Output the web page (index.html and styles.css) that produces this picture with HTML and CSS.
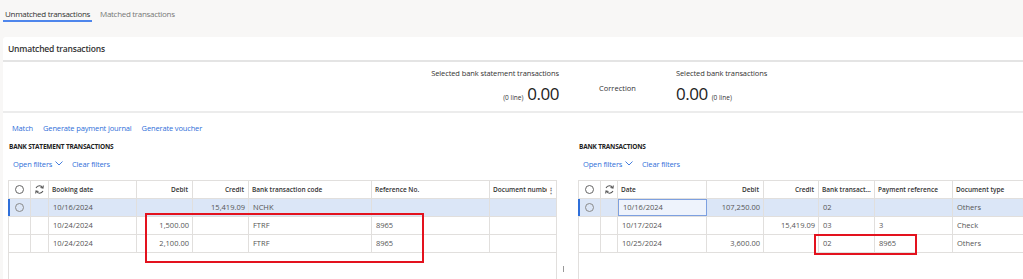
FILE: index.html
```html
<!DOCTYPE html>
<html lang="en">
<head>
<meta charset="utf-8">
<title>Unmatched transactions</title>
<link rel="stylesheet" href="styles.css">
</head>
<body>
<div class="tabs">
  <span class="tab active">Unmatched transactions</span>
  <span class="tab">Matched transactions</span>
</div>
<div class="card">
  <div class="card-header">Unmatched transactions</div>
  <div class="summary">
    <div class="sum-left">
      <div class="sum-label">Selected bank statement transactions</div>
      <div class="sum-value"><span class="lines">(0 line)</span><span class="amount">0.00</span></div>
    </div>
    <div class="sum-mid">Correction</div>
    <div class="sum-right">
      <div class="sum-label">Selected bank transactions</div>
      <div class="sum-value"><span class="amount">0.00</span><span class="lines">(0 line)</span></div>
    </div>
  </div>
  <div class="actions">
    <span class="link">Match</span>
    <span class="link">Generate payment journal</span>
    <span class="link">Generate voucher</span>
  </div>
  <div class="panels">
    <div class="panel panel-left">
      <div class="section-title">BANK STATEMENT TRANSACTIONS</div>
      <div class="filters">
        <span class="link">Open filters <svg class="chev" viewBox="0 0 8 5" width="8" height="5"><path d="M0.5 0.5 L4 4 L7.5 0.5" fill="none" stroke="currentColor" stroke-width="0.9"/></svg></span>
        <span class="link">Clear filters</span>
      </div>
      <div class="grid-wrap">
        <div class="row head lgrid">
          <div class="cell ic"><span class="radio"></span></div>
          <div class="cell ic"><svg class="refresh" viewBox="0 0 12 12" width="11" height="11"><path d="M9.6 4 A4.2 4.2 0 0 0 2.2 4.3" fill="none" stroke="#555" stroke-width="1.1"/><path d="M10.2 1.6 L9.8 4.4 L7.1 3.8" fill="none" stroke="#555" stroke-width="1.1"/><path d="M2.4 8 A4.2 4.2 0 0 0 9.8 7.7" fill="none" stroke="#555" stroke-width="1.1"/><path d="M1.8 10.4 L2.2 7.6 L4.9 8.2" fill="none" stroke="#555" stroke-width="1.1"/></svg></div>
          <div class="cell">Booking date</div>
          <div class="cell num">Debit</div>
          <div class="cell num">Credit</div>
          <div class="cell">Bank transaction code</div>
          <div class="cell">Reference No.</div>
          <div class="cell last clipcell"><span class="clip">Document number</span><span class="dots">&#8942;</span></div>
        </div>
        <div class="row sel lgrid">
          <div class="cell ic"><span class="radio light"></span></div>
          <div class="cell"></div>
          <div class="cell">10/16/2024</div>
          <div class="cell num"></div>
          <div class="cell num">15,419.09</div>
          <div class="cell">NCHK</div>
          <div class="cell"></div>
          <div class="cell last"></div>
        </div>
        <div class="row lgrid">
          <div class="cell"></div>
          <div class="cell"></div>
          <div class="cell">10/24/2024</div>
          <div class="cell num">1,500.00</div>
          <div class="cell num"></div>
          <div class="cell">FTRF</div>
          <div class="cell">8965</div>
          <div class="cell last"></div>
        </div>
        <div class="row lgrid">
          <div class="cell"></div>
          <div class="cell"></div>
          <div class="cell">10/24/2024</div>
          <div class="cell num">2,100.00</div>
          <div class="cell num"></div>
          <div class="cell">FTRF</div>
          <div class="cell">8965</div>
          <div class="cell last"></div>
        </div>
        <div class="annot annot-left"></div>
      </div>
    </div>
    <div class="splitter"><span class="grip"></span></div>
    <div class="panel panel-right">
      <div class="section-title">BANK TRANSACTIONS</div>
      <div class="filters">
        <span class="link">Open filters <svg class="chev" viewBox="0 0 8 5" width="8" height="5"><path d="M0.5 0.5 L4 4 L7.5 0.5" fill="none" stroke="currentColor" stroke-width="0.9"/></svg></span>
        <span class="link">Clear filters</span>
      </div>
      <div class="grid-wrap wide">
        <div class="row head rgrid">
          <div class="cell ic"><span class="radio"></span></div>
          <div class="cell ic"><svg class="refresh" viewBox="0 0 12 12" width="11" height="11"><path d="M9.6 4 A4.2 4.2 0 0 0 2.2 4.3" fill="none" stroke="#555" stroke-width="1.1"/><path d="M10.2 1.6 L9.8 4.4 L7.1 3.8" fill="none" stroke="#555" stroke-width="1.1"/><path d="M2.4 8 A4.2 4.2 0 0 0 9.8 7.7" fill="none" stroke="#555" stroke-width="1.1"/><path d="M1.8 10.4 L2.2 7.6 L4.9 8.2" fill="none" stroke="#555" stroke-width="1.1"/></svg></div>
          <div class="cell">Date</div>
          <div class="cell num">Debit</div>
          <div class="cell num">Credit</div>
          <div class="cell clipcell"><span class="clip ell">Bank transaction code</span></div>
          <div class="cell">Payment reference</div>
          <div class="cell last">Document type</div>
        </div>
        <div class="row sel rgrid">
          <div class="cell ic"><span class="radio light"></span></div>
          <div class="cell"></div>
          <div class="cell focus">10/16/2024</div>
          <div class="cell num">107,250.00</div>
          <div class="cell num"></div>
          <div class="cell">02</div>
          <div class="cell"></div>
          <div class="cell last">Others</div>
        </div>
        <div class="row rgrid">
          <div class="cell"></div>
          <div class="cell"></div>
          <div class="cell">10/17/2024</div>
          <div class="cell num"></div>
          <div class="cell num">15,419.09</div>
          <div class="cell">03</div>
          <div class="cell">3</div>
          <div class="cell last">Check</div>
        </div>
        <div class="row rgrid">
          <div class="cell"></div>
          <div class="cell"></div>
          <div class="cell">10/25/2024</div>
          <div class="cell num">3,600.00</div>
          <div class="cell num"></div>
          <div class="cell">02</div>
          <div class="cell">8965</div>
          <div class="cell last">Others</div>
        </div>
        <div class="annot annot-right"></div>
      </div>
    </div>
  </div>
</div>
</body>
</html>
```
FILE: styles.css
```css
html, body {
  margin: 0;
  padding: 0;
}
body {
  width: 1023px;
  height: 279px;
  overflow: hidden;
  background: #f8f7f6;
  font-family: "Open Sans", "Noto Sans", sans-serif;
  color: #333;
}
.tabs {
  display: flex;
  gap: 6px;
  height: 37px;
  padding-left: 3px;
  box-sizing: border-box;
  padding-top: 8px;
}
.tab {
  font-size: 8px;
  letter-spacing: -0.3px;
  color: #777;
  height: 14px;
  line-height: 12px;
  padding: 0 2px;
  box-sizing: border-box;
}
.tab.active {
  color: #333;
  border-bottom: 2px solid #4f86ec;
}
.card {
  margin-left: 3px;
  width: 1060px;
  background: #fff;
  border-radius: 3px 0 0 0;
  height: 260px;
}
.card-header {
  height: 23px;
  line-height: 23px;
  padding-left: 5px;
  font-size: 8.5px;
  letter-spacing: -0.2px;
  font-weight: 600;
  color: #333;
  border-bottom: 2px solid #e4e4e4;
}
.summary {
  height: 51px;
  border-bottom: 2px solid #ececec;
  display: flex;
  box-sizing: border-box;
}
.sum-left {
  width: 556px;
  text-align: right;
  padding-top: 6px;
}
.sum-mid {
  width: 117px;
  text-align: center;
  font-size: 7.5px;
  color: #333;
  padding-top: 21px;
  box-sizing: border-box;
}
.sum-right {
  padding-top: 6px;
}
.sum-label {
  font-size: 7.5px;
  letter-spacing: -0.1px;
  color: #333;
  line-height: 10px;
}
.sum-value {
  margin-top: 5px;
  display: flex;
  align-items: baseline;
  gap: 4px;
}
.sum-left .sum-value {
  justify-content: flex-end;
}
.amount {
  font-size: 17px;
  letter-spacing: -0.5px;
  line-height: 22px;
  color: #222;
}
.lines {
  font-size: 6.5px;
  color: #333;
}
.actions {
  display: flex;
  gap: 10px;
  padding-left: 9px;
  height: 25px;
  align-items: center;
  padding-top: 5px;
  box-sizing: border-box;
}
.link {
  font-size: 7.5px;
  letter-spacing: -0.15px;
  color: #2f6fd9;
  white-space: nowrap;
}
.panels {
  display: flex;
  padding-left: 5px;
}
.panel-left {
  width: 549px;
}
.splitter {
  width: 21px;
  position: relative;
}
.grip {
  position: absolute;
  left: 6px;
  top: 128px;
  width: 1px;
  height: 6px;
  background: #999;
}
.panel-right {
  width: 480px;
}
.section-title {
  font-size: 6.5px;
  font-weight: 700;
  color: #222;
  height: 17px;
  line-height: 12px;
  padding-top: 3px;
  padding-left: 1px;
  box-sizing: border-box;
  letter-spacing: -0.2px;
}
.filters {
  display: flex;
  gap: 9px;
  padding-left: 5px;
  height: 25px;
  padding-top: 4px;
  line-height: 10px;
  box-sizing: border-box;
  align-items: flex-start;
}
.chev {
  vertical-align: 1px;
  margin-left: 1px;
}
.grid-wrap {
  position: relative;
  border: 1px solid #e1dfdd;
  height: 130px;
  box-sizing: border-box;
  width: 549px;
}
.grid-wrap.wide {
  width: 480px;
}
.row {
  display: grid;
  height: 18px;
  border-bottom: 1px solid #e1dfdd;
  box-sizing: border-box;
}
.lgrid {
  grid-template-columns: 22px 18px 88px 56px 56px 123px 118px 66px;
}
.rgrid {
  grid-template-columns: 22px 17px 89px 57px 55px 56px 78px 100px;
}
.cell {
  border-right: 1px solid #e1dfdd;
  font-size: 7.5px;
  line-height: 17px;
  padding: 0 4px;
  color: #555;
  white-space: nowrap;
  overflow: hidden;
  box-sizing: border-box;
  position: relative;
}
.cell.last {
  border-right: none;
}
.head .cell {
  font-size: 6.5px;
  font-weight: 600;
  color: #333;
  padding: 0 3px;
}
.head .cell.num {
  padding-right: 4px;
}
.cell.num {
  text-align: right;
  padding-right: 3px;
}
.head .cell.clipcell {
  display: flex;
}
.clip {
  overflow: hidden;
  white-space: nowrap;
  flex: 1;
  min-width: 0;
}
.clip.ell {
  text-overflow: ellipsis;
}
.cell.ic {
  padding: 0;
  display: flex;
  align-items: center;
  justify-content: center;
}
.dots {
  flex: none;
  width: 6px;
  text-align: right;
  color: #777;
  font-size: 8px;
}
.radio {
  width: 9px;
  height: 9px;
  border: 1px solid #666;
  border-radius: 50%;
  box-sizing: border-box;
}
.radio.light {
  border-color: #8a8a8a;
}
.refresh {
  display: block;
}
.row.sel {
  background: #dbe6f7;
  position: relative;
}
.row.sel::before {
  content: "";
  position: absolute;
  left: -1px;
  top: 0;
  bottom: 0;
  width: 2px;
  background: #2f6fd9;
}
.cell.focus {
  border: 1px solid #7da0e0;
  background: #eef3fc;
  line-height: 15px;
}
.annot {
  position: absolute;
  border: 2px solid #e3121e;
  box-sizing: border-box;
  pointer-events: none;
}
.annot-left {
  left: 136px;
  top: 32px;
  width: 279px;
  height: 50px;
}
.annot-right {
  left: 235px;
  top: 53px;
  width: 103px;
  height: 21px;
}
```
